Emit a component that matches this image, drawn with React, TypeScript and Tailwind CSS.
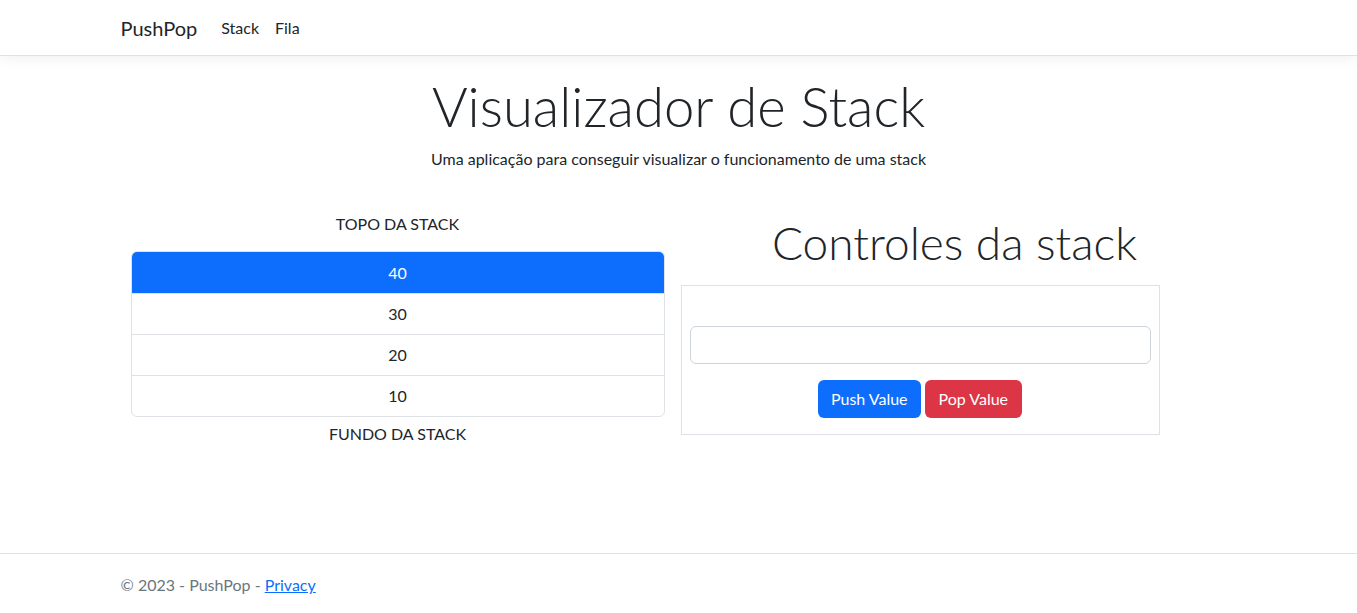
import { useState } from 'react';

// ─── Stack visualizer page ───────────────────────────────────────

export default function App() {
  const [stack, setStack] = useState<number[]>([10, 20, 30, 40]);
  const [value, setValue] = useState('');

  function push() {
    const n = Number(value);
    if (value.trim() === '' || Number.isNaN(n)) return;
    setStack((s) => [...s, n]);
    setValue('');
  }

  function pop() {
    setStack((s) => s.slice(0, -1));
  }

  const items = [...stack].reverse();

  return (
    <div className="min-h-screen flex flex-col bg-white text-[#212529] font-['Lato','Open_Sans',sans-serif] text-base">
      {/* Navbar */}
      <header className="bg-white border-b border-[#dee2e6] shadow-[0_4px_12px_rgba(0,0,0,0.05)]">
        <nav className="mx-auto w-[1140px] px-3 h-[55px] flex items-center">
          <span className="text-[20px] mr-4">PushPop</span>
          <a className="px-2 cursor-pointer">Stack</a>
          <a className="px-2 cursor-pointer">Fila</a>
        </nav>
      </header>

      <main className="mx-auto w-[1140px] pt-4">
        <div className="text-center">
          <h1 className="pt-[2px] text-[54.5px] leading-[1.2] font-light mb-2">Visualizador de Stack</h1>
          <p className="leading-6">Uma aplicação para conseguir visualizar o funcionamento de uma stack</p>
        </div>

        <div className="flex gap-4 mt-[38px]">
          {/* Stack */}
          <div className="ml-[22px] w-[534px] pt-[3px] text-center">
            <p className="leading-6 mb-[15px]">TOPO DA STACK</p>
            <ul className="border border-[#dee2e6] rounded-md overflow-hidden">
              {items.map((v, i) => (
                <li
                  key={i}
                  className={
                    i === 0
                      ? 'h-[41px] flex items-center justify-center bg-[#0d6efd] text-white'
                      : 'h-[41px] flex items-center justify-center border-t border-[#dee2e6]'
                  }
                >
                  {v}
                </li>
              ))}
            </ul>
            <p className="leading-6 mt-[5px]">FUNDO DA STACK</p>
          </div>

          {/* Controls */}
          <div className="w-[548px] pt-[6px]">
            <h2 className="text-center text-[46px] leading-[1.2] font-light mb-[14px]">Controles da stack</h2>
            <div className="w-[479px] border border-[#dee2e6] px-2 pt-[40px] pb-4">
              <input
                value={value}
                onChange={(e) => setValue(e.target.value)}
                className="block w-full h-[38px] rounded-md border border-[#ced4da] px-3 outline-none"
              />
              <div className="flex justify-center gap-1 mt-4">
                <button
                  onClick={push}
                  className="h-[38px] px-[13px] rounded-md bg-[#0d6efd] text-white"
                >
                  Push Value
                </button>
                <button
                  onClick={pop}
                  className="h-[38px] px-[14px] rounded-md bg-[#dc3545] text-white"
                >
                  Pop Value
                </button>
              </div>
            </div>
          </div>
        </div>
      </main>

      {/* Footer */}
      <footer className="mt-auto border-t border-[#dee2e6] h-[60px]">
        <div className="mx-auto w-[1140px] px-3 h-full flex items-center pt-[3px] text-[#6c757d]">
          <span>
            © 2023 - PushPop - <a className="text-[#0d6efd] underline cursor-pointer">Privacy</a>
          </span>
        </div>
      </footer>
    </div>
  );
}
